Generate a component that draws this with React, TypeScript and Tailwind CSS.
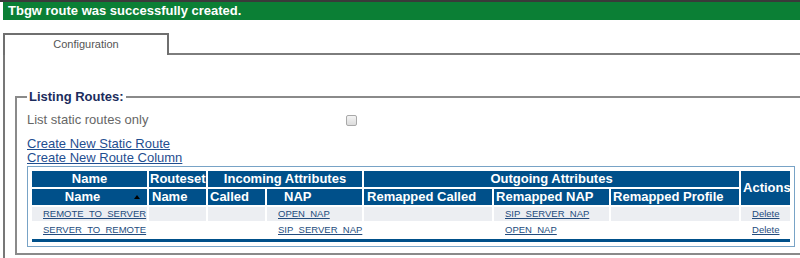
import React from "react";

const ROUTES = [
  { name: "REMOTE_TO_SERVER", nap: "OPEN_NAP", remappedNap: "SIP_SERVER_NAP" },
  { name: "SERVER_TO_REMOTE", nap: "SIP_SERVER_NAP", remappedNap: "OPEN_NAP" },
];

const th = "bg-[#00508a] text-white font-bold text-[13px] leading-[16px] h-[16px] p-0 whitespace-nowrap";
const td = "p-0 pl-[11px] h-[14px] text-left align-middle whitespace-nowrap text-[9.5px] leading-[14px]";
const link = "text-[#234b7d] underline";

function SortArrow() {
  return (
    <svg className="absolute right-[7px] top-[6px]" width="6" height="4" viewBox="0 0 6 4">
      <path d="M3 0 L6 4 L0 4 Z" fill="#000" />
    </svg>
  );
}

function RoutesTable() {
  return (
    <div className="w-fit mt-[1px] border border-[#78a3c6] px-[2px] py-[2px]">
      <table className="table-fixed w-[762px] border-separate border-spacing-[2px]">
        <colgroup>
          <col className="w-[115px]" />
          <col className="w-[57px]" />
          <col className="w-[57px]" />
          <col className="w-[95px]" />
          <col className="w-[128px]" />
          <col className="w-[115px]" />
          <col className="w-[128px]" />
          <col className="w-[49px]" />
        </colgroup>
        <thead>
          <tr>
            <th className={`${th} text-center`}>Name</th>
            <th className={`${th} text-left pl-[1px]`}>Routeset</th>
            <th colSpan={2} className={`${th} text-center`}>Incoming Attributes</th>
            <th colSpan={3} className={`${th} text-center`}>Outgoing Attributes</th>
            <th rowSpan={2} className={`${th} text-left pl-[2px] align-middle`}>Actions</th>
          </tr>
          <tr>
            <th className={`${th} relative text-center bg-[#5b9bc9] pr-[14px]`}>
              Name
              <SortArrow />
            </th>
            <th className={`${th} text-left pl-[3px]`}>Name</th>
            <th className={`${th} text-left pl-[2px]`}>Called</th>
            <th className={`${th} text-left pl-[17px]`}>NAP</th>
            <th className={`${th} text-left pl-[3px]`}>Remapped Called</th>
            <th className={`${th} text-left pl-[2px]`}>Remapped NAP</th>
            <th className={`${th} text-left pl-[2px]`}>Remapped Profile</th>
          </tr>
        </thead>
        <tbody>
          {ROUTES.map((r, i) => {
            const bg = i % 2 === 0 ? "bg-[#eceef2]" : "bg-white";
            return (
              <tr key={r.name}>
                <td className={`${td} ${bg}`}>
                  <a href="#" className={link}>{r.name}</a>
                </td>
                <td className={`${td} ${bg}`} />
                <td className={`${td} ${bg}`} />
                <td className={`${td} ${bg}`}>
                  <a href="#" className={link}>{r.nap}</a>
                </td>
                <td className={`${td} ${bg}`} />
                <td className={`${td} ${bg}`}>
                  <a href="#" className={link}>{r.remappedNap}</a>
                </td>
                <td className={`${td} ${bg}`} />
                <td className={`${td} ${bg}`}>
                  <a href="#" className={link}>Delete</a>
                </td>
              </tr>
            );
          })}
          <tr>
            <td colSpan={8} className="p-0 h-[3px] bg-[#00508a] text-[0px] leading-none" />
          </tr>
        </tbody>
      </table>
    </div>
  );
}

export default function App() {
  return (
    <div className="w-[800px] h-[258px] overflow-hidden bg-white font-['Liberation_Sans',Arial,sans-serif]">
      <div className="h-[2px] bg-[#3a3a3a]" />

      {/* status message */}
      <div className="ml-[3px] h-[18px] bg-[#0b7f35] pl-[5px] text-white font-bold text-[13px] leading-[18px] whitespace-nowrap">
        Tbgw route was successfully created.
      </div>

      {/* tabs */}
      <div className="flex mt-[13px] ml-[3px]">
        <div className="w-[166px] h-[22px] border-t-2 border-x-2 border-[#6f6f6f] text-center text-[11px] leading-[13px] text-[#555] pt-[3px]">
          Configuration
        </div>
        <div className="flex-1 border-b-2 border-[#7d7d7d]" />
      </div>

      {/* panel */}
      <div className="ml-[3px] border-l-2 border-[#777] pt-[34px] h-[203px]">
        <fieldset className="ml-[10px] border-2 border-r-0 border-[#8a8a8a] pl-[10px] pt-[7px] pb-[6px]">
          <legend className="px-[2px] text-[13px] leading-[16px] font-bold text-[#1b2c5c]">
            Listing Routes:
          </legend>

          <div className="flex items-center h-[16px]">
            <span className="w-[319px] text-[13px] leading-[16px] text-[#666]">List static routes only</span>
            <span className="w-[11px] h-[11px] rounded-[2px] border border-[#a9a9a9] bg-gradient-to-b from-[#f4f4f4] to-[#dcdcdc]" />
          </div>

          <div className="mt-[9px] flex flex-col items-start text-[13px] leading-[14px]">
            <a href="#" className="text-[#1f4e90] underline">Create New Static Route</a>
            <a href="#" className="text-[#1f4e90] underline">Create New Route Column</a>
          </div>

          <RoutesTable />
        </fieldset>
      </div>
    </div>
  );
}
